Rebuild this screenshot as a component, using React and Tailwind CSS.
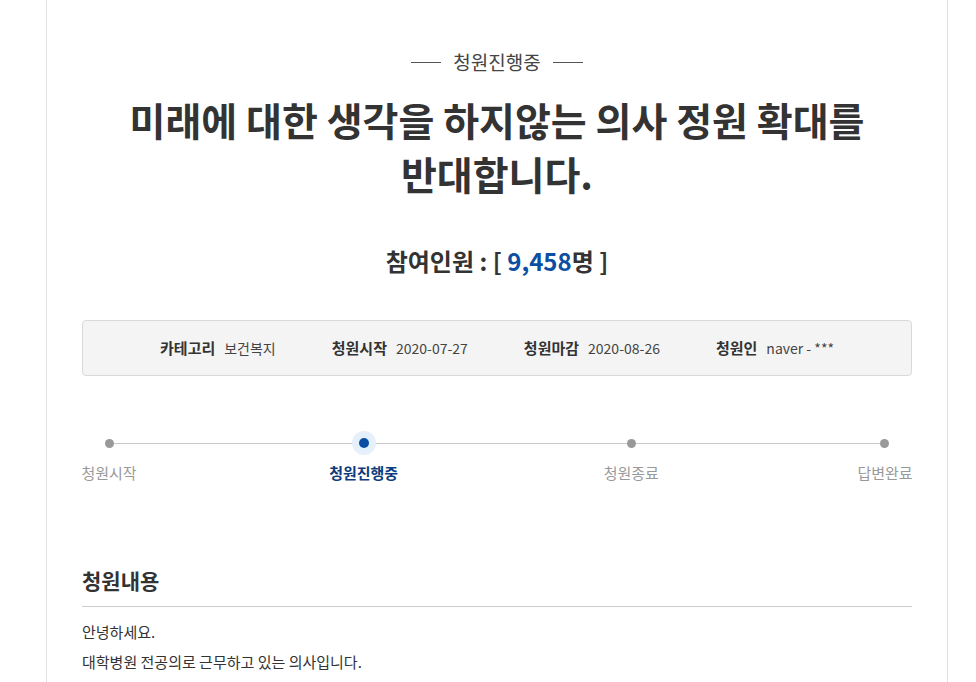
import React from "react";

const steps = [
  { label: "청원시작", active: false, shift: "" },
  { label: "청원진행중", active: true, shift: "-translate-x-[4px]" },
  { label: "청원종료", active: false, shift: "translate-x-[5px]" },
  { label: "답변완료", active: false, shift: "" },
];

const info = [
  { k: "카테고리", v: "보건복지" },
  { k: "청원시작", v: "2020-07-27" },
  { k: "청원마감", v: "2020-08-26" },
  { k: "청원인", v: "naver - ***" },
];

const App = () => {
  return (
    <div
      className="min-h-screen bg-white text-[#333]"
      style={{ fontFamily: '"Noto Sans CJK KR", "Noto Sans", sans-serif' }}
    >
      <div className="ml-[46px] w-[902px] min-h-[682px] border-x border-[#e1e1e1] px-[35px] pt-[48px]">
        <div className="flex items-center justify-center gap-[12px]">
          <span className="w-[30px] h-px bg-[#555]" />
          <span className="text-[19px] leading-[28px] text-[#444]">청원진행중</span>
          <span className="w-[30px] h-px bg-[#555]" />
        </div>

        <h1 className="mt-[16px] text-center text-[39px] leading-[54px] font-bold text-[#333]">
          미래에 대한 생각을 하지않는 의사 정원 확대를
          <br />
          반대합니다.
        </h1>

        <div className="mt-[43px] text-center text-[24px] leading-[36px] font-bold text-[#333]">
          참여인원 : [ <span className="text-[#0b4ea2]">9,458</span>명 ]
        </div>

        <div className="mt-[41px] h-[56px] rounded-[4px] border border-[#d9d9d9] bg-[#f4f4f4] flex items-center justify-center gap-[56px]">
          {info.map((it) => (
            <div key={it.k} className="flex items-center gap-[9px]">
              <b className="text-[15px] font-bold text-[#333]">{it.k}</b>
              <span className="text-[14px] text-[#444]">{it.v}</span>
            </div>
          ))}
        </div>

        <div className="relative mt-[55px]">
          <div className="absolute left-[27px] right-[27px] top-[12px] h-px bg-[#c8c8c8]" />
          <div className="relative flex justify-between">
            {steps.map((s) => (
              <div key={s.label} className={"w-[54px] flex flex-col items-center " + s.shift}>
                <div className="h-[24px] w-[24px] flex items-center justify-center">
                  {s.active ? (
                    <div className="h-[24px] w-[24px] rounded-full bg-[#e6f0fb] flex items-center justify-center">
                      <div className="h-[10px] w-[10px] rounded-full bg-[#0b4ea2]" />
                    </div>
                  ) : (
                    <div className="h-[9px] w-[9px] rounded-full bg-[#999]" />
                  )}
                </div>
                <span
                  className={
                    s.active
                      ? "mt-[6px] whitespace-nowrap text-[15px] leading-[24px] font-bold text-[#0d3c7c]"
                      : "mt-[6px] whitespace-nowrap text-[15px] leading-[24px] text-[#999]"
                  }
                >
                  {s.label}
                </span>
              </div>
            ))}
          </div>
        </div>

        <h2 className="mt-[80px] pb-[11px] text-[21px] leading-[30px] font-bold text-[#333] border-b border-[#ccc]">
          청원내용
        </h2>
        <div className="mt-[10px] text-[15px] leading-[30px] text-[#333]">
          <p>안녕하세요.</p>
          <p>대학병원 전공의로 근무하고 있는 의사입니다.</p>
        </div>
      </div>
    </div>
  );
};

export default App;
